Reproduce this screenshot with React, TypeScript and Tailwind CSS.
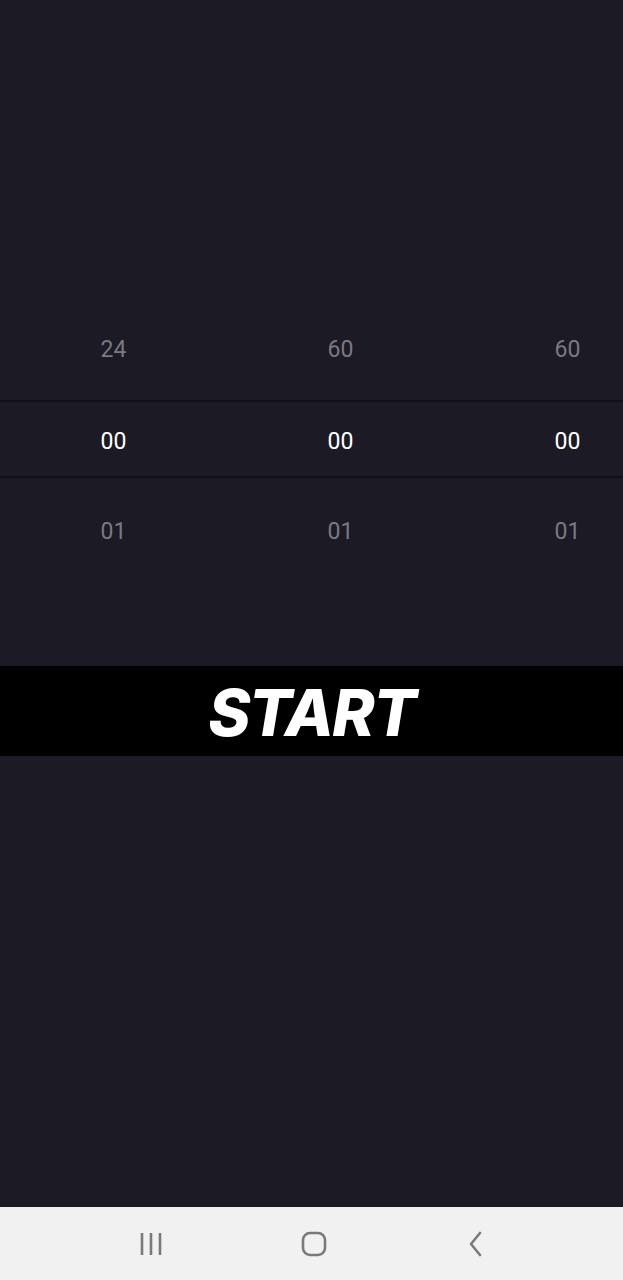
const columns = [
  { prev: "24", value: "00", next: "01" },
  { prev: "60", value: "00", next: "01" },
  { prev: "60", value: "00", next: "01" },
];

function Row({
  items,
  className,
  textClass,
}: {
  items: string[];
  className: string;
  textClass: string;
}) {
  return (
    <div className={`flex ${className}`}>
      {items.map((item, i) => (
        <div
          key={i}
          className={`flex w-[227px] shrink-0 items-center justify-center text-[23px] ${textClass}`}
        >
          {item}
        </div>
      ))}
    </div>
  );
}

export default function App() {
  return (
    <div
      className="flex h-[1280px] w-[623px] flex-col overflow-hidden bg-[#1b1a25]"
      style={{ fontFamily: "Roboto, 'Liberation Sans', sans-serif" }}
    >
      <div className="h-[304px] shrink-0" />

      {/* Time picker */}
      <Row
        items={columns.map((c) => c.prev)}
        className="h-[96px] shrink-0 pb-[4px]"
        textClass="text-[#7a7983]"
      />
      <div className="h-[2px] shrink-0 bg-[#111018]" />
      <Row
        items={columns.map((c) => c.value)}
        className="h-[74px] shrink-0 pt-[6px]"
        textClass="text-white"
      />
      <div className="h-[2px] shrink-0 bg-[#111018]" />
      <Row
        items={columns.map((c) => c.next)}
        className="h-[96px] shrink-0 pt-[12px]"
        textClass="text-[#7a7983]"
      />

      <div className="h-[92px] shrink-0" />

      <button className="flex h-[90px] shrink-0 items-center justify-center bg-black pt-[4px]">
        <span
          className="text-[64px] font-extrabold italic leading-none tracking-tight text-white"
          style={{ fontFamily: "Inter, 'Liberation Sans', sans-serif" }}
        >
          START
        </span>
      </button>

      <div className="flex-1" />

      {/* System navigation bar */}
      <nav className="flex h-[73px] shrink-0 items-center justify-center gap-[136px] bg-[#f1f1f1] pl-[5px] text-[#7a7a7a]">
        <svg width="26" height="26" viewBox="0 0 26 26" fill="none">
          <path
            d="M3 2v22M12 2v22M21 2v22"
            stroke="currentColor"
            strokeWidth="2.6"
          />
        </svg>
        <svg width="26" height="26" viewBox="0 0 26 26" fill="none">
          <rect
            x="2"
            y="2"
            width="22"
            height="22"
            rx="7"
            stroke="currentColor"
            strokeWidth="2.6"
          />
        </svg>
        <svg width="26" height="26" viewBox="0 0 26 26" fill="none">
          <path
            d="M17 2L8 13l9 11"
            stroke="currentColor"
            strokeWidth="2.6"
            strokeLinecap="round"
            strokeLinejoin="round"
          />
        </svg>
      </nav>
    </div>
  );
}
